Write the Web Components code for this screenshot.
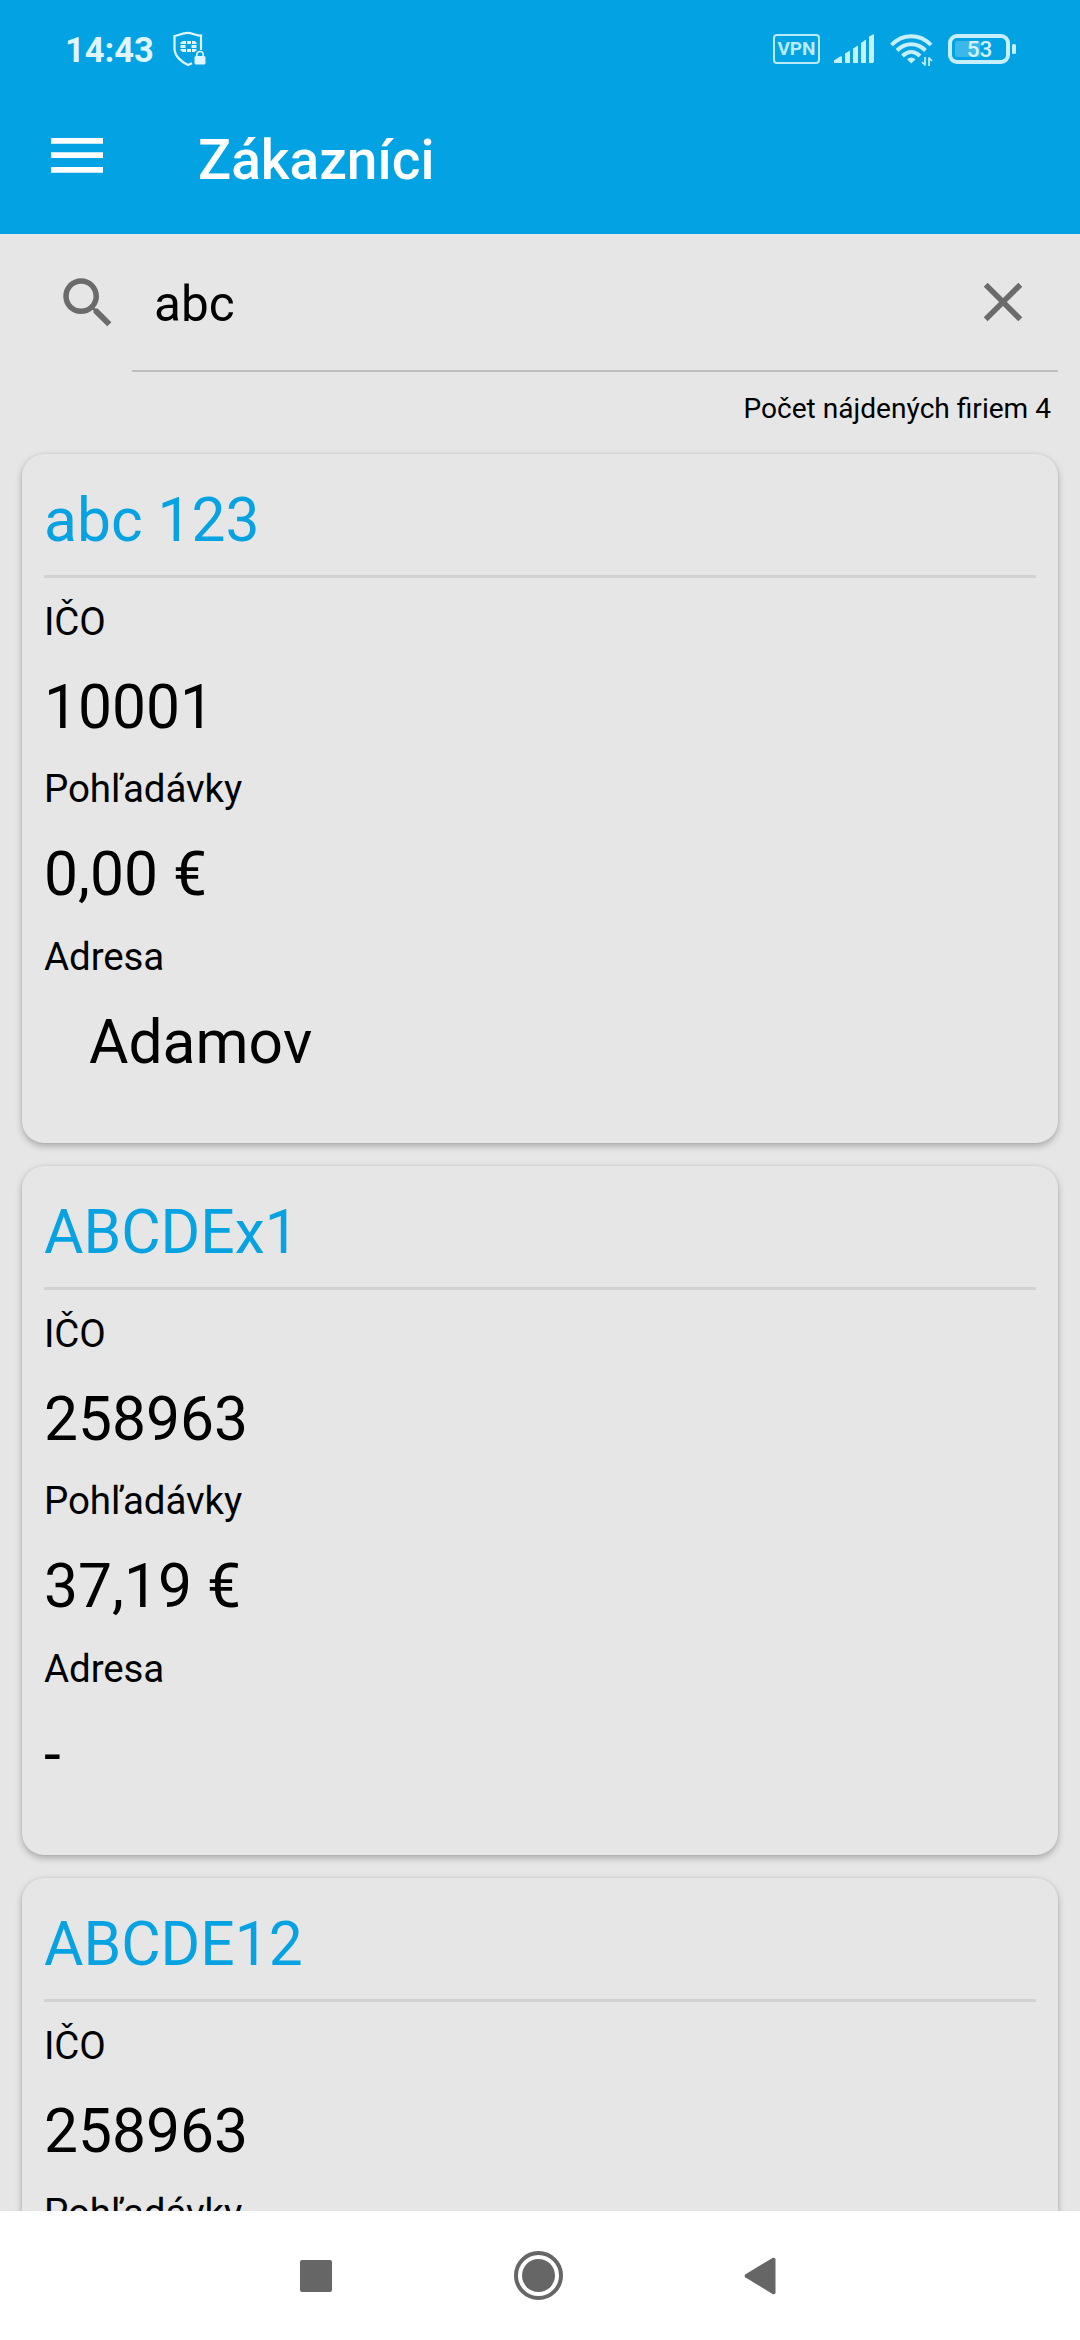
<!DOCTYPE html>
<html lang="sk">
<head>
<meta charset="utf-8">
<title>Zákazníci</title>
<style>
    html, body{
        margin: 0;
        height: 100%;
        overflow: hidden;
    }
    body{
        display: flex;
        flex-direction: column;
        background-color: #e6e6e6;
        color: #000;
        font-family: Roboto, sans-serif;
    }
    customer-list{
        flex: 1;
        min-height: 0;
    }
</style>
</head>
<body>
    <status-bar time="14:43" battery="53"></status-bar>
    <app-header>Zákazníci</app-header>
    <search-bar>abc</search-bar>
    <customer-list count="4">
        <customer-card name="abc 123" ico="10001" debt="0,00 €">&nbsp;&nbsp;&nbsp;Adamov</customer-card>
        <customer-card name="ABCDEx1" ico="258963" debt="37,19 €">-</customer-card>
        <customer-card name="ABCDE12" ico="258963" debt="37,19 €">-</customer-card>
    </customer-list>
    <nav-bar></nav-bar>

<script>
class BaseComponent extends HTMLElement{
    render(html){
        const template = document.createElement('template');
        template.innerHTML = html;
        this.attachShadow({mode: 'open'});
        this.shadowRoot.appendChild(template.content.cloneNode(true));
    }
}

class StatusBarComponent extends BaseComponent{
    constructor(){
        super()
        this.time = this.getAttribute('time');
        this.battery = this.getAttribute('battery');

        this.render(`
        <style>
            :host{
                display: flex;
                flex: none;
                justify-content: space-between;
                box-sizing: border-box;
                height: 98px;
                padding: 30px 62px 0 65px;
                background-color: #03a2e3;
                color: #dff5ff;
            }
            .side{
                display: flex;
                align-items: flex-start;
            }
            .time{
                font-size: 34.5px;
                font-weight: 700;
                line-height: 40px;
                margin-right: 17px;
            }
            svg{
                display: block;
            }
            .vpn{
                box-sizing: border-box;
                width: 47px;
                height: 30px;
                margin: 4px 14px 0 0;
                border: 2px solid #b9ebff;
                border-radius: 4px;
                color: #b9ebff;
                font-size: 19px;
                font-weight: 700;
                line-height: 26px;
                text-align: center;
            }
            .signal{
                margin: 4px 16px 0 0;
            }
            .wifi{
                margin: 3px 15px 0 0;
            }
            .battery{
                display: grid;
                margin-top: 4px;
            }
            .battery > *{
                grid-area: 1 / 1;
            }
            .battery span{
                width: 63px;
                color: #d5f3ff;
                font-size: 22.5px;
                font-weight: 500;
                line-height: 31px;
                text-align: center;
            }
        </style>
        <div class='side'>
            <div class='time'>${this.time}</div>
            <svg width='36' height='38' viewBox='0 0 36 38' fill='#dff5ff'>
                <path d='M21 33.2 L17 35 C9 31 4.5 27 3.5 20 V6 C8 5.6 11 2.8 16.500 2.800 C21 2.800 25 5.600 30 5.700 V20' fill='none' stroke='#dff5ff' stroke-width='2.200'/>
                <path d='M12 11h3v3h-5.500v-1.500zM16 11h4v3h-4zM21 11h2.500l2 1.500v1.500h-4.500zM9.500 15h5v3h-5zM20.500 15h5v3h-5zM9.500 19h5.500v3h-3l-2.500-1.500zM16 19h4v3h-4zM21 19h4.500v1.500l-2 1.500h-2.500z'/>
                <rect x='23.500' y='26' width='11' height='8.500' rx='1.500'/>
                <path d='M25.800 26v-1.500a3.200 3 0 0 1 6.400 0v1.500' fill='none' stroke='#dff5ff' stroke-width='1.600'/>
            </svg>
        </div>
        <div class='side'>
            <div class='vpn'>VPN</div>
            <svg class='signal' width='40' height='29' viewBox='0 0 40 29' fill='#c8efff'>
                <path d='M0 29v-2.500l6-4h2v6.500zM11 19.500l5-3v12.500h-5zM19 14.500l5-3v17.500h-5zM27 9l5-3.500v23.500h-5zM35 2.500l5-2.500v28l-1 1h-4z'/>
            </svg>
            <svg class='wifi' width='43' height='34' viewBox='0 0 43 34' fill='none' stroke='#c8efff' stroke-width='4'>
                <path d='M1.500 12C12.500 .200 30 .200 41 12'/>
                <path d='M7 17.500C15 9.200 27.500 9.200 35.500 17.500'/>
                <path d='M12.500 23C18 17.600 24.500 17.600 30 23'/>
                <path d='M21.300 30.500l-4.300-4.300q4.300-3.200 8.600 0z' fill='#c8efff' stroke='none'/>
                <path d='M35 24v8.500M35.500 32.500l-3.500-3.500M39 33v-8.500M38.500 24.500l3.500 3.500' stroke-width='1.700'/>
            </svg>
            <div class='battery'>
                <svg width='70' height='30' viewBox='0 0 70 30'>
                    <rect x='2' y='2' width='58' height='26' rx='7' fill='none' stroke='#c8efff' stroke-width='4'/>
                    <path d='M9 7h23v16h-23q-2 0-2-2v-12q0-2 2-2z' fill='#3bb7ea'/>
                    <rect x='64' y='10' width='4' height='10' rx='1.500' fill='#c8efff'/>
                </svg>
                <span>${this.battery}</span>
            </div>
        </div>
        `);
    }
}

class AppHeaderComponent extends BaseComponent{
    constructor(){
        super()
        this.render(`
        <style>
            :host{
                display: flex;
                flex: none;
                align-items: flex-start;
                height: 136px;
                background-color: #03a2e3;
                color: white;
            }
            svg{
                margin: 40px 95px 0 51px;
            }
            h1{
                margin: 30px 0 0;
                font-size: 55px;
                font-weight: 500;
                line-height: 64px;
            }
        </style>
        <svg width='52' height='35' viewBox='0 0 52 35' fill='white'>
            <path d='M0 0h52v5.700h-52zM0 14.300h52v5.700h-52zM0 29h52v5.700h-52z'/>
        </svg>
        <h1><slot></slot></h1>
        `);
    }
}

class SearchBarComponent extends BaseComponent{
    constructor(){
        super()
        this.render(`
        <style>
            :host{
                display: flex;
                flex: none;
                height: 138px;
                padding: 0 22px 0 54.75px;
            }
            svg{
                flex: none;
                fill: #6b6b6b;
            }
            .search{
                margin: 35.75px 11.25px 0 0;
            }
            .field{
                display: flex;
                flex: 1;
                justify-content: space-between;
                box-sizing: border-box;
                padding: 0 21.75px 0 22px;
                border-bottom: 2px solid #bebebe;
            }
            .text{
                margin-top: 41px;
                font-size: 49.5px;
                line-height: 58px;
            }
            .clear{
                margin-top: 34.5px;
            }
        </style>
        <svg class='search' width='66' height='66' viewBox='0 0 24 24'>
            <path d='M15.500 14h-.790l-.280-.270C15.410 12.590 16 11.110 16 9.500 16 5.910 13.090 3 9.500 3S3 5.910 3 9.500 5.910 16 9.500 16c1.610 0 3.090-.590 4.230-1.570l.270.280v.790l5 4.990L20.490 19l-4.990-5zm-6 0C7.010 14 5 11.990 5 9.500S7.010 5 9.500 5 14 7.010 14 9.500 11.990 14 9.500 14z'/>
        </svg>
        <div class='field'>
            <div class='text'><slot></slot></div>
            <svg class='clear' width='66' height='66' viewBox='0 0 24 24'>
                <path d='M19 6.410L17.590 5 12 10.590 6.410 5 5 6.410 10.590 12 5 17.590 6.410 19 12 13.410 17.590 19 19 17.590 13.410 12z'/>
            </svg>
        </div>
        `);
    }
}

class CustomerListComponent extends BaseComponent{
    constructor(){
        super()
        this.count = this.getAttribute('count');

        this.render(`
        <style>
            :host{
                display: flex;
                flex-direction: column;
                overflow: hidden;
            }
            .count{
                flex: none;
                height: 32px;
                margin: 20px 29px 30px;
                font-size: 28.1px;
                line-height: 33px;
                text-align: right;
            }
            .cards{
                display: flex;
                flex-direction: column;
                gap: 23px;
                padding: 0 22px;
            }
        </style>
        <div class='count'>Počet nájdených firiem ${this.count}</div>
        <div class='cards'><slot></slot></div>
        `);
    }
}

class CustomerCardComponent extends BaseComponent{
    constructor(){
        super()
        this.name = this.getAttribute('name');
        this.ico = this.getAttribute('ico');
        this.debt = this.getAttribute('debt');

        this.render(`
        <style>
            :host{
                display: block;
                flex: none;
                box-sizing: border-box;
                height: 689px;
                padding: 31px 22px 0;
                border-radius: 22px;
                background-color: #e6e6e6;
                box-shadow: 0 3px 7px rgba(0,0,0,.27), 0 0 2px rgba(0,0,0,.08);
            }
            h2{
                margin: 0 0 21px;
                padding-bottom: 19px;
                border-bottom: 3px solid #d2d2d2;
                color: #07a2e1;
                font-size: 60.5px;
                font-weight: 400;
                line-height: 71px;
                font-kerning: none;
            }
            dl, dd{
                margin: 0;
            }
            dt{
                margin-bottom: 27.8px;
                font-size: 38.5px;
                line-height: 45px;
                letter-spacing: -.1px;
            }
            dd{
                margin-bottom: 23.65px;
                font-size: 60.5px;
                line-height: 71px;
                font-kerning: none;
            }
        </style>
        <h2>${this.name}</h2>
        <dl>
            <dt>IČO</dt>
            <dd>${this.ico}</dd>
            <dt>Pohľadávky</dt>
            <dd>${this.debt}</dd>
            <dt>Adresa</dt>
            <dd><slot></slot></dd>
        </dl>
        `);
    }
}

class NavBarComponent extends BaseComponent{
    constructor(){
        super()
        this.render(`
        <style>
            :host{
                display: flex;
                flex: none;
                justify-content: space-between;
                align-items: center;
                box-sizing: border-box;
                height: 129px;
                padding: 0 304px 0 300px;
                background-color: white;
            }
            svg{
                fill: #666;
            }
        </style>
        <svg width='32' height='32' viewBox='0 0 32 32'><rect width='32' height='32' rx='2'/></svg>
        <svg width='49' height='49' viewBox='0 0 49 49'>
            <circle cx='24.500' cy='24.500' r='22.500' fill='none' stroke='#666' stroke-width='4'/>
            <circle cx='24.500' cy='24.500' r='16.500'/>
        </svg>
        <svg width='32' height='38' viewBox='0 0 32 38'><path d='M1.200 17.600L28.500.900Q31.500 0 31.500 2.500V35.500Q31.500 38 28.500 37L1.200 20.200Q0 19 1.200 17.600z'/></svg>
        `);
    }
}

window.customElements.define('status-bar', StatusBarComponent);
window.customElements.define('app-header', AppHeaderComponent);
window.customElements.define('search-bar', SearchBarComponent);
window.customElements.define('customer-list', CustomerListComponent);
window.customElements.define('customer-card', CustomerCardComponent);
window.customElements.define('nav-bar', NavBarComponent);
</script>
</body>
</html>
